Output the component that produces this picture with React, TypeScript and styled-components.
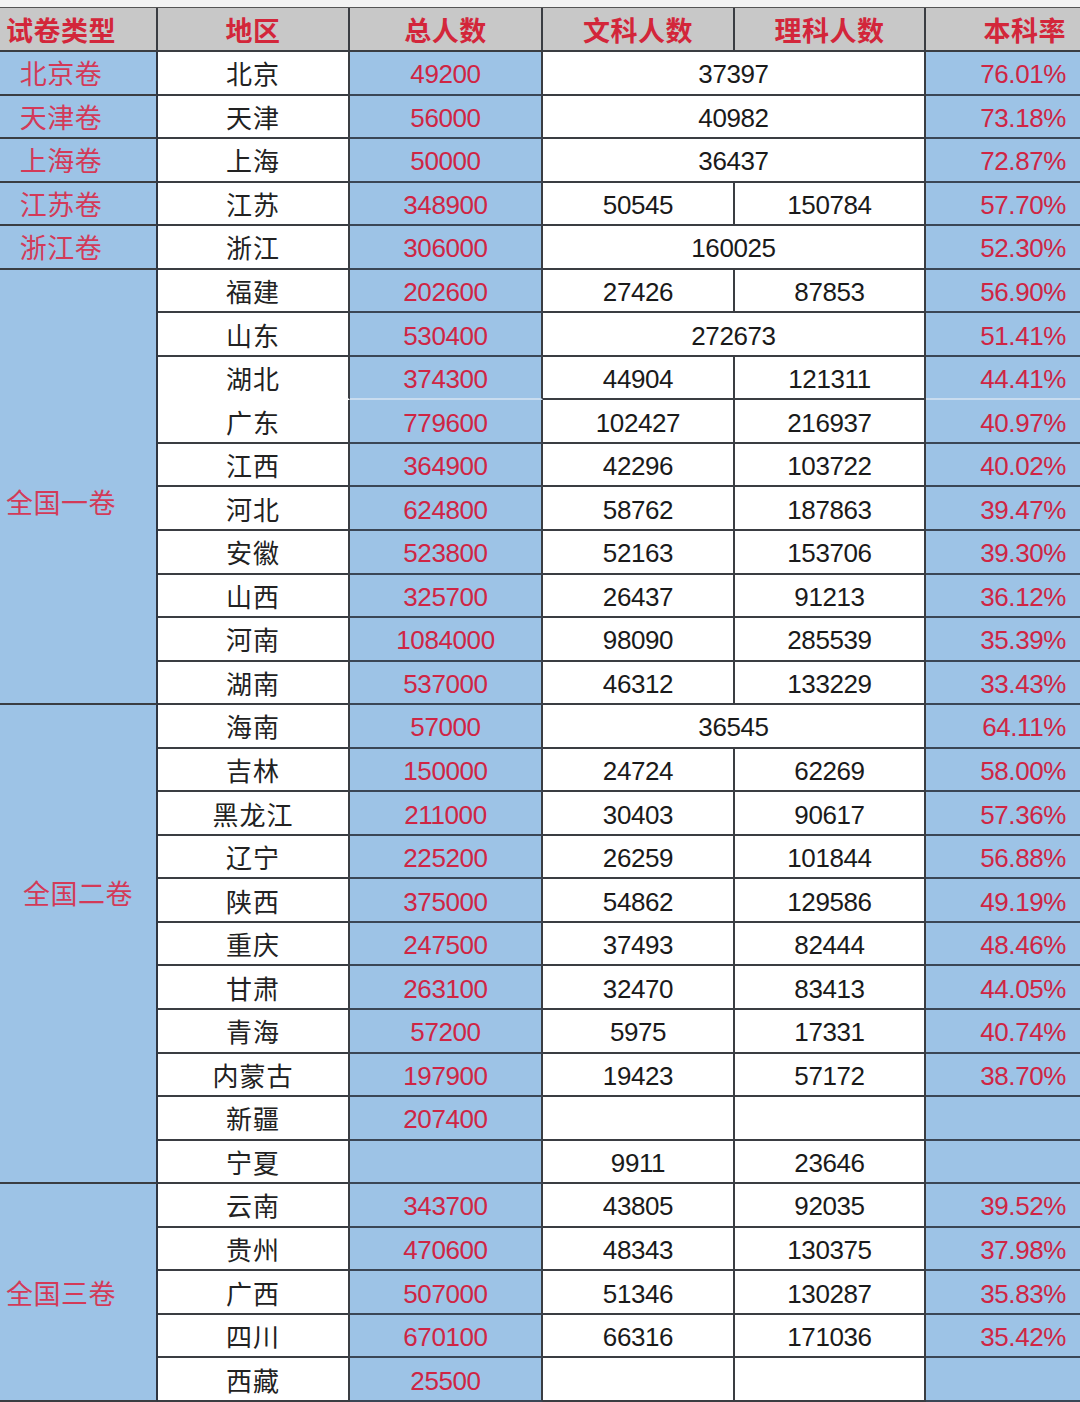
import React from 'react';
import styled, { createGlobalStyle } from 'styled-components';

type Row = {
  region: string;
  total: string;
  wen?: string;
  li?: string;
  both?: string;
  rate: string;
  noTop?: boolean;
};

type Group = {
  label: string;
  drop?: number;
  lift?: number;
  centered?: boolean;
  rows: Row[];
};

const groups: Group[] = [
  { label: '北京卷', rows: [{ region: '北京', total: '49200', both: '37397', rate: '76.01%' }] },
  { label: '天津卷', rows: [{ region: '天津', total: '56000', both: '40982', rate: '73.18%' }] },
  { label: '上海卷', rows: [{ region: '上海', total: '50000', both: '36437', rate: '72.87%' }] },
  { label: '江苏卷', rows: [{ region: '江苏', total: '348900', wen: '50545', li: '150784', rate: '57.70%' }] },
  { label: '浙江卷', rows: [{ region: '浙江', total: '306000', both: '160025', rate: '52.30%' }] },
  {
    label: '全国一卷',
    drop: 30,
    rows: [
      { region: '福建', total: '202600', wen: '27426', li: '87853', rate: '56.90%' },
      { region: '山东', total: '530400', both: '272673', rate: '51.41%' },
      { region: '湖北', total: '374300', wen: '44904', li: '121311', rate: '44.41%' },
      { region: '广东', total: '779600', wen: '102427', li: '216937', rate: '40.97%', noTop: true },
      { region: '江西', total: '364900', wen: '42296', li: '103722', rate: '40.02%' },
      { region: '河北', total: '624800', wen: '58762', li: '187863', rate: '39.47%' },
      { region: '安徽', total: '523800', wen: '52163', li: '153706', rate: '39.30%' },
      { region: '山西', total: '325700', wen: '26437', li: '91213', rate: '36.12%' },
      { region: '河南', total: '1084000', wen: '98090', li: '285539', rate: '35.39%' },
      { region: '湖南', total: '537000', wen: '46312', li: '133229', rate: '33.43%' },
    ],
  },
  {
    label: '全国二卷',
    lift: 102,
    centered: true,
    rows: [
      { region: '海南', total: '57000', both: '36545', rate: '64.11%' },
      { region: '吉林', total: '150000', wen: '24724', li: '62269', rate: '58.00%' },
      { region: '黑龙江', total: '211000', wen: '30403', li: '90617', rate: '57.36%' },
      { region: '辽宁', total: '225200', wen: '26259', li: '101844', rate: '56.88%' },
      { region: '陕西', total: '375000', wen: '54862', li: '129586', rate: '49.19%' },
      { region: '重庆', total: '247500', wen: '37493', li: '82444', rate: '48.46%' },
      { region: '甘肃', total: '263100', wen: '32470', li: '83413', rate: '44.05%' },
      { region: '青海', total: '57200', wen: '5975', li: '17331', rate: '40.74%' },
      { region: '内蒙古', total: '197900', wen: '19423', li: '57172', rate: '38.70%' },
      { region: '新疆', total: '207400', wen: '', li: '', rate: '' },
      { region: '宁夏', total: '', wen: '9911', li: '23646', rate: '' },
    ],
  },
  {
    label: '全国三卷',
    rows: [
      { region: '云南', total: '343700', wen: '43805', li: '92035', rate: '39.52%' },
      { region: '贵州', total: '470600', wen: '48343', li: '130375', rate: '37.98%' },
      { region: '广西', total: '507000', wen: '51346', li: '130287', rate: '35.83%' },
      { region: '四川', total: '670100', wen: '66316', li: '171036', rate: '35.42%' },
      { region: '西藏', total: '25500', wen: '', li: '', rate: '' },
    ],
  },
];

const GlobalStyle = createGlobalStyle`
  html, body {
    margin: 0;
    padding: 0;
    background: #f3f3f3;
  }
  body {
    font-family: "Liberation Sans", "Noto Sans CJK SC", sans-serif;
    overflow: hidden;
  }
`;

const Page = styled.div`
  width: 1080px;
  height: 1402px;
  overflow: hidden;
  background: #f3f3f3;
  padding-top: 7px;
  box-sizing: border-box;
`;

const Sheet = styled.div`
  display: grid;
  grid-template-columns: 158px 192px 193px 192px 191px 154px;
  grid-template-rows: 44px;
  grid-auto-rows: 43.55px;
  border-top: 1px solid #555;
`;

const Cell = styled.div`
  box-sizing: border-box;
  display: flex;
  align-items: center;
  justify-content: center;
  border-right: 2px solid #3a3d42;
  border-bottom: 2px solid #3a3d42;
  white-space: nowrap;
  overflow: hidden;
`;

const HeadCell = styled(Cell)<{ $align?: 'left' | 'right' }>`
  background: #c8c8c8;
  color: #d3263a;
  font-family: "Noto Sans CJK SC", sans-serif;
  font-weight: 700;
  font-size: 27px;
  letter-spacing: 0.5px;
  ${(p) => (p.$align === 'left' ? 'padding-right: 34px;' : '')}
  ${(p) => (p.$align === 'right' ? 'justify-content: flex-end; padding-right: 14px; border-right: none;' : '')}
`;

const TypeCell = styled(Cell)<{ $span: number; $drop?: number; $lift?: number; $centered?: boolean }>`
  grid-row: span ${(p) => p.$span};
  background: #9dc3e6;
  color: #d33a58;
  font-family: "Noto Sans CJK SC", sans-serif;
  font-size: 27px;
  letter-spacing: 0.5px;
  padding-right: ${(p) => (p.$centered ? 0 : 34)}px;
  padding-top: ${(p) => p.$drop ?? 0}px;
  padding-bottom: ${(p) => p.$lift ?? 0}px;
  border-right-color: #2f3540;
`;

const RegionCell = styled(Cell)`
  background: #ffffff;
  color: #222;
  font-family: "Noto Sans CJK SC", sans-serif;
  font-size: 26px;
  letter-spacing: 1px;
`;

const TotalCell = styled(Cell)`
  padding-top: 4px;
  background: #9dc3e6;
  color: #cf2544;
  font-size: 26px;
  letter-spacing: -0.4px;
  border-bottom-color: #3a4656;
`;

const NumCell = styled(Cell)<{ $wide?: boolean }>`
  grid-column: span ${(p) => (p.$wide ? 2 : 1)};
  padding-top: 4px;
  background: #ffffff;
  color: #1a1a1a;
  font-size: 26px;
  letter-spacing: -0.4px;
`;

const RateCell = styled(Cell)`
  justify-content: flex-end;
  padding-top: 4px;
  padding-right: 14px;
  background: #9dc3e6;
  color: #cf2544;
  font-size: 26px;
  letter-spacing: -0.4px;
  border-right: none;
  border-bottom-color: #3a4656;
`;

const App = () => {
  const cells: React.ReactNode[] = [];

  groups.forEach((g, gi) => {
    g.rows.forEach((r, ri) => {
      const key = `${gi}-${ri}`;
      if (ri === 0) {
        cells.push(
          <TypeCell
            key={`${key}-t`}
            $span={g.rows.length}
            $drop={g.drop}
            $lift={g.lift}
            $centered={g.centered}
          >
            {g.label}
          </TypeCell>
        );
      }
      // the sheet has a missing rule under 湖北
      const softLine = g.rows[ri + 1]?.noTop;
      cells.push(
        <RegionCell key={`${key}-r`} style={softLine ? { borderBottomColor: '#ffffff' } : undefined}>
          {r.region}
        </RegionCell>
      );
      cells.push(
        <TotalCell key={`${key}-n`} style={softLine ? { borderBottomColor: '#c9dcef' } : undefined}>
          {r.total}
        </TotalCell>
      );
      if (r.both !== undefined) {
        cells.push(
          <NumCell key={`${key}-b`} $wide>
            {r.both}
          </NumCell>
        );
      } else {
        cells.push(<NumCell key={`${key}-w`}>{r.wen}</NumCell>);
        cells.push(<NumCell key={`${key}-l`}>{r.li}</NumCell>);
      }
      cells.push(
        <RateCell key={`${key}-p`} style={softLine ? { borderBottomColor: '#c9dcef' } : undefined}>
          {r.rate}
        </RateCell>
      );
    });
  });

  return (
    <Page>
      <GlobalStyle />
      <Sheet>
        <HeadCell $align="left">试卷类型</HeadCell>
        <HeadCell>地区</HeadCell>
        <HeadCell>总人数</HeadCell>
        <HeadCell>文科人数</HeadCell>
        <HeadCell>理科人数</HeadCell>
        <HeadCell $align="right">本科率</HeadCell>
        {cells}
      </Sheet>
    </Page>
  );
};

export default App;
